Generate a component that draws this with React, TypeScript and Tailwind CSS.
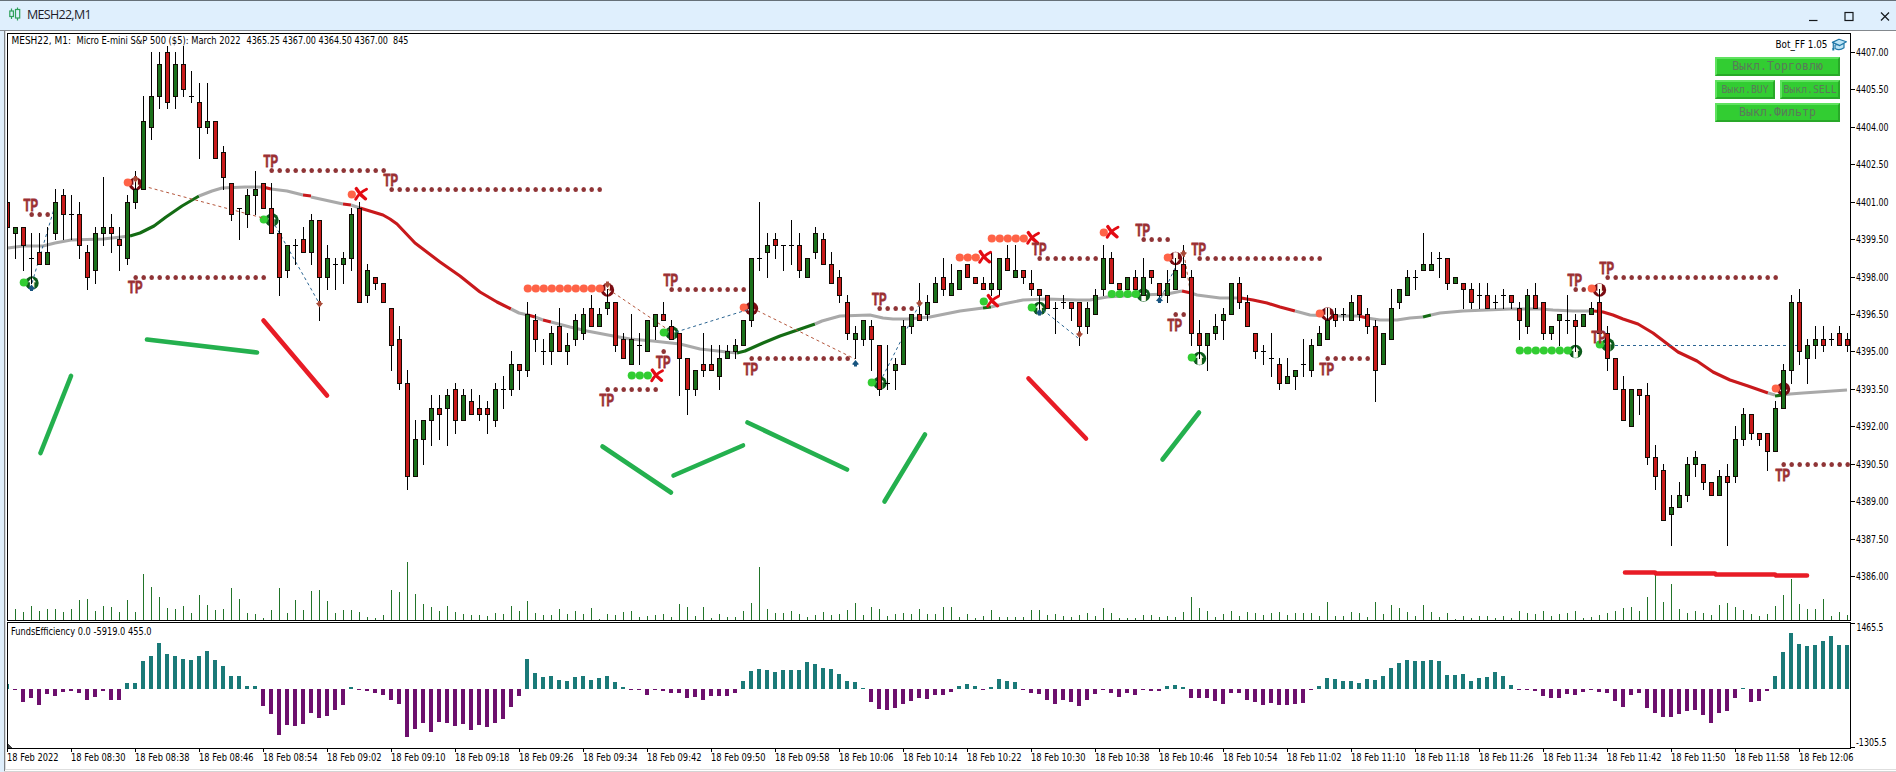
import type { ReactNode } from "react";

const FIRST_X = 7;
const STEP = 8;
const TICK = 524 / 84;
const BASE_Y = 576;
const colX = (i: number) => FIRST_X + i * STEP;
const snap = (y: number) => Math.round(BASE_Y - Math.round((BASE_Y - y) / TICK) * TICK);

/* colour, high, body top, body bottom, low */
const CANDLES = `
r 202 202 227 227|g 227 227 233 258|r 227 227 245 270|d 233 258 258 283|r 233 252 264 264|g 227 252 264 264|g 189 202 233 239|r 189 195 214 239
d 195 214 214 239|r 202 214 245 258|r 245 252 277 289|g 227 233 270 283|g 177 227 233 245|r 214 227 233 252|r 227 239 245 270|g 195 202 258 264
g 170 189 202 208|g 95 120 189 189|g 52 95 127 139|g 52 64 95 108|r 46 52 102 108|g 52 64 95 108|r 46 64 89 95|d 70 95 95 102
r 83 102 127 158|g 83 120 127 133|r 120 120 158 158|r 145 152 177 189|r 183 183 214 220|d 208 208 208 239|g 189 195 214 227|g 170 189 195 214
r 183 183 208 208|r 183 208 233 233|r 220 233 277 295|g 245 245 270 277|d 239 245 245 264|r 227 239 252 252|g 214 220 252 264|r 220 220 277 320
g 245 258 277 289|d 258 264 264 289|g 252 258 264 283|g 208 214 258 270|r 202 208 302 302|g 264 270 295 302|r 277 277 283 289|r 283 283 302 302
r 308 308 345 370|r 327 339 383 389|r 370 383 476 489|g 420 439 476 476|g 420 420 439 464|g 395 408 420 445|r 395 408 414 439|g 389 395 408 445
r 383 389 420 433|g 389 395 420 420|r 389 402 414 414|r 395 408 414 420|r 402 408 414 433|g 383 389 420 427|d 377 389 389 408|g 352 364 389 395
r 364 364 370 389|g 302 314 370 377|r 314 320 339 352|d 339 352 352 364|g 327 333 352 364|r 308 327 352 352|g 333 345 352 364|g 314 320 339 345
g 308 314 333 339|r 295 308 327 327|g 308 314 327 327|g 289 302 308 314|r 302 302 345 352|r 333 339 358 358|g 314 339 364 364|d 333 345 345 364
g 320 320 351 351|g 314 314 326 339|r 302 314 320 320|r 320 326 339 339|r 333 333 358 395|r 358 358 389 414|g 370 370 389 395|r 333 364 370 376
r 345 364 370 370|g 345 358 376 389|g 345 351 358 358|g 339 345 351 358|g 320 320 345 345|g 258 258 320 326|d 202 258 258 270|g 233 245 252 277
r 233 239 245 258|d 245 245 245 270|d 220 245 245 264|r 233 245 270 277|g 258 258 277 277|g 227 233 252 258|r 233 239 264 264|r 252 264 283 283
r 270 277 295 302|r 295 302 333 339|g 326 333 339 358|g 320 320 339 345|r 320 326 339 370|r 345 345 389 395|d 345 383 383 389|g 358 364 370 389
g 320 326 364 364|g 314 314 326 333|r 283 314 320 320|g 295 302 314 320|g 277 283 302 302|r 258 277 289 295|g 264 283 295 295|g 270 270 289 289
r 264 264 277 277|r 277 277 283 283|r 277 283 289 289|g 252 283 289 295|g 258 258 289 295|r 245 258 270 270|g 245 270 277 277|r 270 270 277 283
r 270 283 289 295|r 289 289 295 312|r 295 295 308 308|d 302 308 308 333|d 295 302 302 308|r 302 302 308 320|r 302 302 326 345|g 302 308 326 333
g 289 295 314 314|g 245 258 289 295|r 252 258 283 283|r 283 283 289 289|g 277 277 289 289|r 270 277 289 289|g 258 277 295 295|r 270 270 277 283
r 283 283 295 302|g 270 283 295 302|g 258 270 289 289|r 245 264 277 277|r 270 277 333 345|r 320 333 345 358|g 333 333 345 370|g 314 326 333 339
g 308 314 320 339|g 283 283 314 314|r 277 283 302 308|r 295 302 326 326|r 333 333 351 358|d 345 351 351 364|d 333 358 358 376|r 358 364 383 389
g 358 376 383 383|g 370 370 376 389|d 339 364 364 376|g 339 345 370 376|g 326 333 345 345|g 308 320 339 339|r 308 314 320 326|d 308 314 314 320
g 295 302 320 320|r 295 295 314 320|r 308 314 326 333|r 320 326 370 401|g 333 333 364 364|g 289 308 339 339|g 289 289 302 308|g 270 277 295 295
d 270 277 277 289|g 233 264 270 270|g 252 264 270 270|d 252 258 258 277|r 258 258 283 289|g 277 277 283 283|r 283 283 289 308|r 283 289 302 308
d 283 295 295 308|r 283 295 308 308|d 295 302 302 308|d 289 295 295 308|r 295 295 302 308|r 302 308 320 339|g 289 295 326 333|r 283 295 308 308
r 302 302 333 339|g 326 326 333 339|g 314 314 320 345|d 295 320 320 333|r 314 320 326 351|g 314 314 326 326|g 302 308 314 314|r 289 302 333 333
r 326 333 358 370|r 358 358 389 389|r 376 389 420 420|g 389 389 426 426|r 389 389 395 414|r 383 395 458 464|r 445 458 476 489|r 464 470 520 520
g 495 508 514 545|g 483 495 508 508|g 458 464 495 501|g 451 458 464 476|r 464 464 483 489|r 483 483 495 495|g 470 476 495 495|r 464 476 483 545
g 426 439 476 483|g 408 414 439 445|r 414 414 433 439|r 433 433 439 445|r 433 433 451 470|g 401 408 451 451|g 364 370 408 408|g 295 302 370 383
r 289 302 351 364|g 339 345 358 383|g 326 339 345 358|r 326 339 345 351|d 333 339 339 345|r 326 333 345 345|r 333 339 345 351
`
  .trim()
  .split(/[|\n]/)
  .map((row) => {
    const [kind, ...v] = row.trim().split(" ");
    return { kind, y: v.map((n) => snap(Number(n))) };
  });

const VOLUME = [
  0, 11, 8, 14, 9, 11, 11, 8, 11, 20, 21, 9, 14, 13, 8, 20, 8, 46, 33, 23, 12, 11, 14, 7, 25, 15, 10, 11, 32, 21,
  7, 6, 2, 10, 32, 7, 20, 10, 29, 30, 19, 7, 10, 10, 8, 3, 2, 5, 30, 28, 58, 26, 16, 13, 9, 14, 8, 6, 5, 5,
  4, 7, 6, 14, 9, 19, 7, 5, 5, 11, 6, 9, 6, 12, 1, 6, 5, 8, 9, 3, 4, 5, 6, 3, 16, 13, 4, 13, 2, 6,
  3, 3, 9, 17, 53, 11, 7, 7, 9, 6, 3, 5, 8, 5, 6, 10, 17, 5, 13, 11, 4, 6, 7, 6, 11, 6, 6, 13, 13, 3,
  6, 2, 4, 10, 3, 3, 3, 3, 10, 10, 5, 6, 4, 3, 5, 7, 4, 12, 7, 2, 2, 2, 5, 5, 3, 4, 3, 8, 23, 12,
  9, 3, 6, 9, 4, 8, 7, 5, 7, 8, 5, 7, 7, 7, 4, 18, 4, 4, 8, 7, 3, 18, 6, 15, 12, 8, 4, 15, 8, 3,
  7, 1, 4, 2, 4, 4, 2, 4, 2, 9, 7, 6, 9, 4, 6, 7, 9, 2, 3, 5, 7, 9, 12, 13, 9, 23, 45, 18, 36, 11,
  7, 9, 7, 5, 15, 17, 13, 10, 6, 4, 6, 14, 25, 41, 16, 11, 11, 21, 4, 8, 5,
];

const FUNDS = [
  5, -1, -13, -9, -16, -5, -7, -3, -2, -4, -11, -8, -2, -11, -11, 6, 6, 28, 33, 46, 35, 33, 30, 29, 33, 38, 29, 23, 13, 13,
  3, 3, -17, -25, -46, -36, -37, -35, -24, -29, -27, -21, -16, 2, -1, -2, -4, -6, -11, -15, -48, -40, -34, -43, -33, -34, -37, -35, -41, -36,
  -38, -34, -30, -18, -7, 30, 16, 12, 13, 9, 8, 12, 13, 9, 11, 13, 7, 2, -1, -1, -6, -1, -2, -4, -4, -9, -8, -11, -7, -7,
  -7, -4, 8, 18, 20, 19, 17, 19, 19, 19, 27, 25, 21, 20, 15, 8, 7, 1, -13, -20, -21, -19, -15, -12, -9, -10, -6, -6, -3, 3,
  5, 3, -1, 2, 10, 8, 7, -1, -4, -5, -11, -15, -11, -13, -17, -11, -5, -1, -4, -8, -4, -6, -1, -2, -2, 3, 4, 2, -9, -9,
  -9, -12, -15, -4, -4, -11, -13, -16, -14, -16, -16, -15, -14, -1, 3, 11, 10, 8, 8, 6, 10, 9, 13, 21, 26, 29, 28, 28, 29, 28,
  14, 14, 15, 8, 11, 12, 17, 13, 4, -1, -1, -2, -7, -9, -9, -5, -6, -3, -1, -3, -4, -12, -18, -6, -4, -19, -24, -28, -28, -25,
  -22, -21, -26, -34, -24, -22, -9, 1, -13, -12, -2, 13, 37, 56, 45, 43, 44, 48, 53, 44, 44,
];

const GRAY = "#a9a9a9";
const RED = "#c8191c";
const GREEN = "#146c14";

const AVERAGE: [string, string][] = [
  [GRAY, "8,248 23,246 43,246 55,243 71,240 103,239 130,236"],
  [GREEN, "130,236 140,233 154,226 166,217 182,206 199,196"],
  [GRAY, "199,196 212,191 222,188 245,187 263,187"],
  [RED, "263,187 271,189"],
  [GRAY, "271,189 287,191 303,195"],
  [RED, "303,195 311,196"],
  [GRAY, "311,197 343,204"],
  [RED, "343,204 351,205"],
  [GRAY, "351,205 360,208"],
  [RED, "360,208 383,215 390,219 397,224 415,243 440,262 460,276 480,292 497,302 511,309"],
  [GRAY, "511,309 519,313 528,315"],
  [RED, "528,315 535,317"],
  [GRAY, "535,317 543,320"],
  [RED, "543,320 551,322"],
  [GRAY, "551,322 570,327 587,331 608,335 630,339 653,341 680,344 700,349 727,352 737,353"],
  [GREEN, "737,353 745,351 763,343 780,336 815,324"],
  [GRAY, "815,324 822,321 840,316 870,315 883,318 893,319 907,319 930,317 960,311 983,308"],
  [GREEN, "983,308 991,307"],
  [GRAY, "991,307 1003,304 1023,300 1047,299 1077,300 1090,300 1107,297 1140,295 1167,294 1182,291"],
  [RED, "1182,291 1191,293"],
  [GRAY, "1191,293 1197,295 1220,298 1241,298"],
  [RED, "1241,298 1253,300 1267,303 1280,307 1295,311"],
  [GRAY, "1295,311 1310,315 1327,316 1359,316"],
  [RED, "1359,316 1367,318"],
  [GRAY, "1367,318 1380,320 1397,320 1410,318 1423,317"],
  [GREEN, "1423,317 1431,315"],
  [GRAY, "1431,315 1440,313 1463,311 1510,309 1540,309 1553,310 1573,311 1594,311"],
  [RED, "1594,311 1603,312 1613,315 1623,319 1638,324 1653,333 1678,352 1697,361 1713,372 1730,380 1748,386 1768,393"],
  [GRAY, "1768,393 1775,395"],
  [GREEN, "1775,396 1783,395"],
  [GRAY, "1783,395 1790,394 1803,393 1847,390"],
];

/* first column, last column, y */
const TARGET_DOTS = [
  [3, 5, 214], [33, 47, 170], [16, 32, 277], [48, 74, 189], [75, 81, 389], [83, 92, 289], [82, 82, 351],
  [93, 105, 358], [109, 113, 308], [129, 136, 258], [142, 145, 239], [146, 147, 314], [149, 164, 258],
  [165, 170, 358], [196, 198, 289], [200, 221, 277], [222, 230, 464],
];
const SELL_DOTS = [
  [15, 15, 182], [43, 43, 194], [65, 74, 288], [92, 92, 307], [119, 121, 257], [123, 127, 238], [137, 137, 232],
  [145, 145, 257], [164, 164, 313], [198, 198, 288], [221, 221, 388],
];
const BUY_DOTS = [
  [2, 2, 282], [32, 32, 219], [78, 80, 375], [82, 82, 332], [108, 108, 382], [122, 122, 301], [128, 128, 307],
  [138, 141, 293.5], [148, 148, 357], [189, 195, 350], [199, 199, 344],
];
const TP_LABELS = [
  [23.5, 199], [263.5, 154.5], [128, 281], [383.5, 173.5], [599.5, 393.5], [663.5, 273.5], [656, 355.5],
  [743.5, 362.5], [872, 292.5], [1032, 242.5], [1135.5, 223.5], [1167.5, 318.5], [1191.5, 242.5],
  [1319.5, 362.5], [1567.5, 273.5], [1599.5, 261.5], [1591.5, 330.5], [1775.5, 468.5],
];
const CROSSES = [[360.5, 194], [656.5, 375.5], [984.5, 257], [1032.5, 238], [992.5, 301], [1112, 232]];
const SELL_RINGS = [[135.5, 184], [607.5, 290], [751.5, 308.5], [1175.5, 258.5], [1327.5, 314], [1599.5, 290], [1783.5, 389]];
const BUY_RINGS = [
  [32, 283], [272, 220], [672, 333], [880, 383], [1039.5, 308.5], [1143.5, 295], [1199.5, 358.5], [1575.5, 351.5], [1608, 345],
];
const BUY_DEALS = [[31.5, 288], [855.5, 363.5], [1039.5, 312.5], [1159.5, 300]];
const SELL_DEALS = [[135.5, 179], [319.5, 304], [607.5, 284.5], [919.5, 303.5], [1079.5, 334.5], [1183.5, 253.5]];

const BROWN_LINK = "#b4563c";
const BLUE_LINK = "#2b6592";
const LINKS: [string, number, number, number, number][] = [
  [BROWN_LINK, 143, 186, 263, 218],
  [BLUE_LINK, 32, 283, 54, 209],
  [BLUE_LINK, 272, 220, 319, 303],
  [BROWN_LINK, 608, 289, 670, 331],
  [BLUE_LINK, 676, 332, 750, 309],
  [BROWN_LINK, 752, 308, 855, 359],
  [BLUE_LINK, 880, 382, 919, 305],
  [BLUE_LINK, 1043, 310, 1078, 338],
  [BLUE_LINK, 1161, 298, 1176, 266],
  [BROWN_LINK, 1184, 254, 1190, 290],
  [BLUE_LINK, 1615, 345.5, 1799, 345.5],
];

const PEN_GREEN = "#24b04e";
const PEN_RED = "#e81c26";
const STROKES: [string, string][] = [
  [PEN_GREEN, "40.5,453 71,376"],
  [PEN_GREEN, "147,339.5 257,352.5"],
  [PEN_RED, "263.5,320.5 327,395.5"],
  [PEN_GREEN, "602.5,446.5 671,492.5"],
  [PEN_GREEN, "673.5,475.5 743,445.5"],
  [PEN_GREEN, "747.5,422.5 847,469.5"],
  [PEN_GREEN, "884.5,501.5 925,434.5"],
  [PEN_RED, "1028.5,378.5 1086,438.5"],
  [PEN_GREEN, "1162.5,459.5 1199,412.5"],
  [PEN_RED, "1625,572.5 1655,572.5 1656,573.5 1715,573.5 1716,574.5 1775,574.5 1776,575.5 1807,575.5"],
];

const PRICES = Array.from({ length: 15 }, (_, k) => 4407 - k * 1.5);
const TIMES = Array.from({ length: 29 }, (_, k) => {
  if (k === 0) return "18 Feb 2022";
  const m = 8 * 60 + 30 + (k - 1) * 8;
  return `18 Feb ${String(Math.floor(m / 60)).padStart(2, "0")}:${String(m % 60).padStart(2, "0")}`;
});

function Label({ x, y, w, children }: { x: number; y: number; w: number; children: string }) {
  return (
    <text x={x} y={y} textLength={w} lengthAdjust="spacingAndGlyphs" className="whitespace-pre fill-black">
      {children}
    </text>
  );
}

function Candles() {
  return (
    <g shapeRendering="crispEdges">
      {CANDLES.map(({ kind, y: [high, top, bottom, low] }, i) => {
        const x = colX(i);
        const cut = i === 0 ? 2 : 0;
        return (
          <g key={i}>
            <rect x={x} y={high} width={1} height={low - high + 1} fill="#000" />
            {kind === "d" ? (
              <rect x={x - 2} y={top} width={5} height={1} fill="#000" />
            ) : (
              <>
                <rect x={x - 2 + cut} y={top} width={5 - cut} height={bottom - top + 1} fill="#120a04" />
                <rect
                  x={x - 1 + cut}
                  y={top + 1}
                  width={3 - cut}
                  height={bottom - top - 1}
                  fill={kind === "g" ? "#1b701b" : "#c81a1a"}
                />
              </>
            )}
          </g>
        );
      })}
    </g>
  );
}

function DotRows({ rows, r, rx, dx, fill }: { rows: number[][]; r: number; rx: number; dx: number; fill: string }) {
  return (
    <g fill={fill}>
      {rows.flatMap(([from, to, y]) =>
        Array.from({ length: to - from + 1 }, (_, k) => (
          <ellipse key={`${from}-${k}-${y}`} cx={colX(from + k) + dx} cy={y + 0.5} rx={rx} ry={r} />
        )),
      )}
    </g>
  );
}

function Ring({ x, y, buy }: { x: number; y: number; buy: boolean }) {
  return (
    <g transform={`translate(${x} ${y}) scale(1 ${buy ? 1 : -1})`}>
      <circle r={6.7} fill={buy ? "#0d5c1c" : "#7a0c12"} />
      <path d="M0 -5.4L4 -0.8H2.1V6.3H-2.1V-0.8H-4z" fill="#fff" />
      <path d="M1.7 -2.6V5.6" stroke="#fbf3cf" strokeWidth={1.2} />
    </g>
  );
}

function Deal({ x, y, buy }: { x: number; y: number; buy: boolean }) {
  return (
    <path
      transform={`translate(${x} ${y}) scale(1 ${buy ? 1 : -1})`}
      d="M0 -3.5L3.5 0.8L1.5 1.4V3H-1.5V1.4L-3.5 0.8z"
      fill={buy ? "#17547f" : "#a84a38"}
    />
  );
}

function Chart({ children }: { children?: ReactNode }) {
  return (
    <svg viewBox="0 31 1896 741" width={1896} height={741} className="block font-['DejaVu_Sans',sans-serif] text-[9.7px]">
      <g shapeRendering="crispEdges">
        <rect x={0} y={31} width={4} height={741} fill="#dfeefb" />
        <rect x={4} y={31} width={1} height={741} fill="#7d8185" />
        <rect x={5} y={31} width={1} height={738} fill="#d9dcdf" />
        <rect x={5} y={769} width={1891} height={1} fill="#dedede" />
        <rect x={4} y={771} width={1892} height={1} fill="#d4d4d4" />
      </g>

      <g fill="#22742a" shapeRendering="crispEdges">
        {VOLUME.map((v, i) => (
          <rect key={i} x={colX(i)} y={620 - v} width={1} height={v} />
        ))}
      </g>

      <g fill="none" strokeWidth={3.1} strokeLinejoin="round">
        {AVERAGE.map(([color, points], i) => (
          <polyline key={i} points={points} stroke={color} />
        ))}
      </g>

      <DotRows rows={TARGET_DOTS} r={2.5} rx={2.3} dx={0.7} fill="#8f3436" />
      {SELL_RINGS.map(([x, y]) => (
        <Ring key={x} x={x} y={y} buy={false} />
      ))}
      {BUY_RINGS.map(([x, y]) => (
        <Ring key={x} x={x} y={y} buy />
      ))}
      <DotRows rows={SELL_DOTS} r={4.1} rx={4.1} dx={0.8} fill="#ff6347" />
      <DotRows rows={BUY_DOTS} r={4.1} rx={4.1} dx={0.8} fill="#32cd32" />

      <g strokeDasharray="3 3" strokeWidth={1}>
        {LINKS.map(([color, x1, y1, x2, y2], i) => (
          <line key={i} x1={x1} y1={y1} x2={x2} y2={y2} stroke={color} />
        ))}
      </g>

      <Candles />

      {BUY_DEALS.map(([x, y]) => (
        <Deal key={x} x={x} y={y} buy />
      ))}
      {SELL_DEALS.map(([x, y]) => (
        <Deal key={x} x={x} y={y} buy={false} />
      ))}

      {CROSSES.map(([x, y]) => (
        <g key={x} transform={`translate(${x} ${y})`} fill="none" stroke="#e30b13" strokeLinecap="round">
          <path d="M-4.2 -5.4C-2.5 -2.5 1 2 5 4.8" strokeWidth={3.4} />
          <path d="M6 -4.8C2 -3 -2.5 1 -4.8 5.2" strokeWidth={2.9} />
        </g>
      ))}

      <g
        className="font-['Liberation_Sans_Narrow','Liberation_Sans',sans-serif] text-[17px] font-bold"
        fill="#9b2f33"
        stroke="#9b2f33"
        strokeWidth={0.8}
      >
        {TP_LABELS.map(([x, y]) => (
          <text key={x} x={x} y={y + 12} textLength={14.4} lengthAdjust="spacingAndGlyphs">
            TP
          </text>
        ))}
      </g>

      <g shapeRendering="crispEdges">
        {FUNDS.map((v, i) => {
          const left = i === 0 ? 8 : colX(i) - 2;
          return (
            <rect
              key={i}
              x={left}
              y={v > 0 ? 689 - v : 689}
              width={colX(i) + 2 - left}
              height={Math.abs(v)}
              fill={v > 0 ? "#1a7a78" : "#6d0f6d"}
            />
          );
        })}
      </g>

      <g fill="#000" shapeRendering="crispEdges">
        <rect x={7} y={33} width={1844} height={1} />
        <rect x={7} y={33} width={1} height={588} />
        <rect x={1850} y={33} width={1} height={588} />
        <rect x={7} y={620} width={1844} height={1} />
        <rect x={7} y={622} width={1844} height={1} />
        <rect x={7} y={622} width={1} height={127} />
        <rect x={1850} y={622} width={1} height={127} />
        <rect x={7} y={748} width={1844} height={1} />
        <path d="M8 744L12 748H8z" fill="#444" />
        {PRICES.map((p) => (
          <rect key={p} x={1851} y={snap(BASE_Y - (p - 4386) * 4 * TICK)} width={4} height={1} />
        ))}
        <rect x={1851} y={623} width={4} height={1} />
        <rect x={1851} y={747} width={4} height={1} />
        {TIMES.map((t, k) => (
          <rect key={t} x={7 + k * 64} y={749} width={1} height={3} />
        ))}
      </g>

      {PRICES.map((p) => (
        <Label key={p} x={1856} y={snap(BASE_Y - (p - 4386) * 4 * TICK) + 4} w={32.5}>
          {p.toFixed(2)}
        </Label>
      ))}
      <Label x={1856.5} y={631} w={27}>1465.5</Label>
      <Label x={1856} y={746} w={30.5}>-1305.5</Label>
      {TIMES.map((t, k) => (
        <Label key={t} x={7 + k * 64} y={761} w={k === 0 ? 51.5 : 54.5}>
          {t}
        </Label>
      ))}
      <Label x={11.5} y={44} w={59.5}>MESH22, M1:</Label>
      <Label x={76.5} y={44} w={164}>{"Micro E-mini S&P 500 ($5): March 2022"}</Label>
      <Label x={246.5} y={44} w={162}>{"4365.25 4367.00 4364.50 4367.00  845"}</Label>
      <Label x={11} y={635} w={140.5}>FundsEfficiency 0.0 -5919.0 455.0</Label>
      <Label x={1775.5} y={48} w={52}>Bot_FF 1.05</Label>

      <g fill="#bfe6f7" stroke="#1f78a8" strokeWidth={1.2} strokeLinejoin="round">
        <path d="M1835 45V48.6Q1839.5 51.2 1844 47.8V43.5z" />
        <path d="M1832.4 42.4L1839 39.2L1846.4 41.8L1839.8 45.6z" />
        <path d="M1833.3 43V48.5" fill="none" />
        <path d="M1833.3 48V50.5" fill="none" strokeWidth={2} />
      </g>

      <g fill="none" strokeWidth={4.6} strokeLinecap="round" strokeLinejoin="round">
        {STROKES.map(([color, points]) => (
          <polyline key={points} points={points} stroke={color} />
        ))}
      </g>
      {children}
    </svg>
  );
}

function BotButton({ label, small }: { label: string; small?: boolean }) {
  return (
    <button
      className={`flex h-[19px] flex-1 items-center justify-center whitespace-nowrap border-2 border-t-[#5fe25f] border-l-[#5fe25f] border-r-[#29a829] border-b-[#29a829] bg-[#32cd32] font-['DejaVu_Sans_Mono',monospace] leading-none text-[#5a7a5a] ${
        small ? "text-[9.8px]" : "text-[11.6px]"
      }`}
    >
      {label}
    </button>
  );
}

function TitleBar() {
  return (
    <header className="flex h-[31px] items-center justify-between border-t border-b border-t-[#667078] border-b-[#83888d] bg-[#dfeffd] pr-[6px] pl-[9px]">
      <div className="flex items-center gap-[6px]">
        <svg width="12" height="14" viewBox="0 0 12 14" className="-mt-[3px]" fill="none" stroke="#2fa05a" strokeWidth="1.2">
          <path d="M2.5 1.5V4M2.5 9.5V12M8.5 0.5V2.5M8.5 11V13.5" />
          <rect x="0.8" y="4" width="3.6" height="5.5" />
          <rect x="6.5" y="2.5" width="4.2" height="8.5" />
        </svg>
        <h1 className="-mt-px font-['Open_Sans','Noto_Sans',sans-serif] text-[12.5px] leading-none tracking-[-0.7px] text-[#1c1c28]">
          MESH22,M1
        </h1>
      </div>
      <svg width="82" height="12" viewBox="0 0 82 12" className="mt-[2px]" fill="none" stroke="#15191d" strokeWidth="1.2">
        <path d="M1 9.5H9.5" />
        <rect x="37" y="1.5" width="8" height="8" />
        <path d="M73 1.5L81 9.5M81 1.5L73 9.5" />
      </svg>
    </header>
  );
}

export default function App() {
  return (
    <div className="flex h-[772px] w-[1896px] flex-col overflow-hidden bg-white">
      <TitleBar />
      <main className="relative">
        <Chart />
        <div className="absolute top-[26px] left-[1715px] flex w-[125px] flex-col gap-1">
          <div className="flex">
            <BotButton label="Выкл.Торговлю" />
          </div>
          <div className="grid grid-cols-2 gap-[5px]">
            <BotButton label="Выкл.BUY" small />
            <BotButton label="Выкл.SELL" small />
          </div>
          <div className="flex">
            <BotButton label="Выкл.Фильтр" />
          </div>
        </div>
      </main>
    </div>
  );
}
